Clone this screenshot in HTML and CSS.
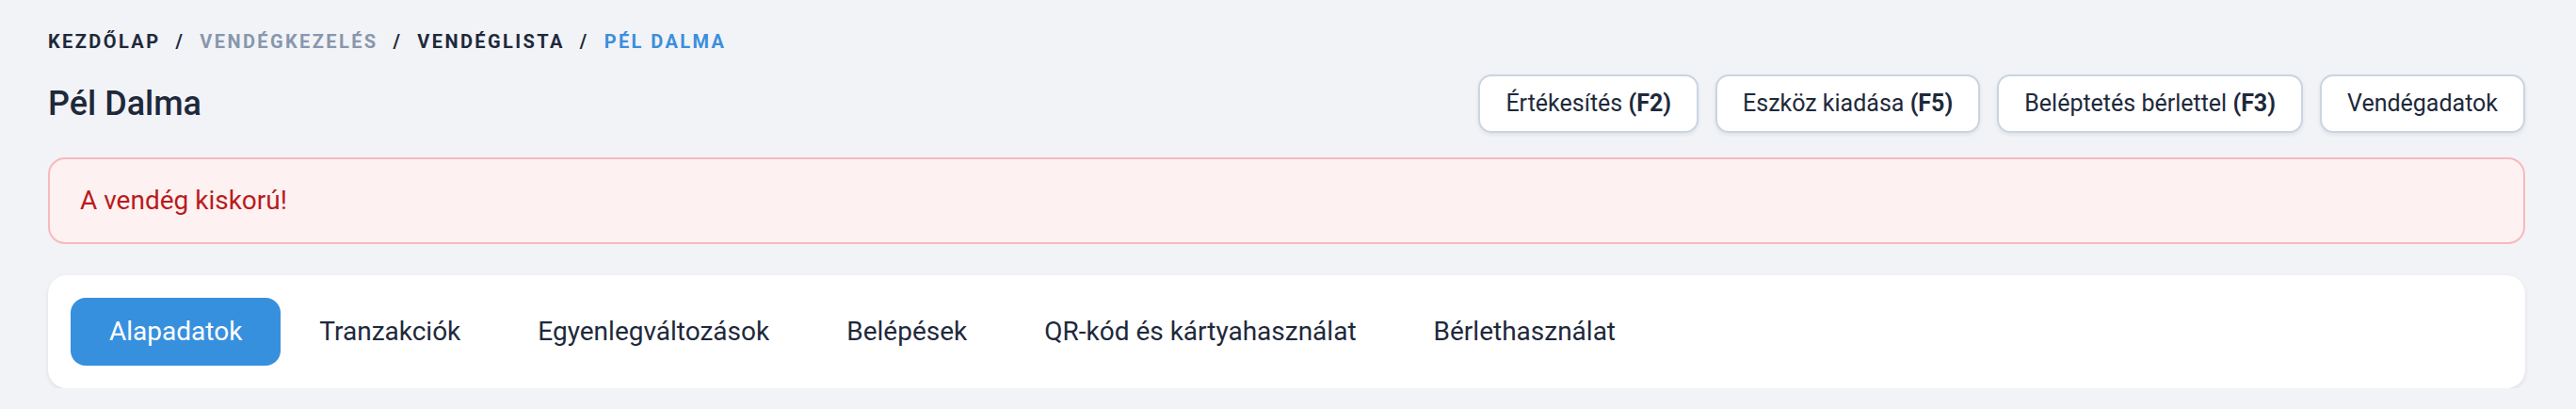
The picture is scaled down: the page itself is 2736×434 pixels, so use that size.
FILE: index.html
```html
<!DOCTYPE html>
<html lang="hu">
<head>
<meta charset="utf-8">
<title>Pél Dalma</title>
<link rel="stylesheet" href="styles.css">
</head>
<body>
<main class="page">
  <nav class="breadcrumb">
    <a class="crumb crumb-dark" href="#">Kezdőlap</a>
    <span class="sep">/</span>
    <a class="crumb crumb-muted" href="#">Vendégkezelés</a>
    <span class="sep">/</span>
    <a class="crumb crumb-dark" href="#">Vendéglista</a>
    <span class="sep">/</span>
    <span class="crumb crumb-active">Pél Dalma</span>
  </nav>

  <header class="header">
    <h1 class="title">Pél Dalma</h1>
    <div class="actions">
      <button class="btn">Értékesítés <b>(F2)</b></button>
      <button class="btn">Eszköz kiadása <b>(F5)</b></button>
      <button class="btn">Beléptetés bérlettel <b>(F3)</b></button>
      <button class="btn">Vendégadatok</button>
    </div>
  </header>

  <div class="alert">A vendég kiskorú!</div>

  <section class="card">
    <div class="tabs">
      <button class="tab tab-active">Alapadatok</button>
      <button class="tab">Tranzakciók</button>
      <button class="tab">Egyenlegváltozások</button>
      <button class="tab">Belépések</button>
      <button class="tab">QR-kód és kártyahasználat</button>
      <button class="tab">Bérlethasználat</button>
    </div>
  </section>
</main>
</body>
</html>
```

FILE: styles.css
```css
* { box-sizing: border-box; }

html, body {
  margin: 0;
  padding: 0;
  background: #f2f3f7;
}

body {
  font-family: Roboto, "Liberation Sans", Arial, sans-serif;
  color: #1e293b;
}

.page {
  padding: 30px 54px 0 51px;
}

.breadcrumb {
  display: flex;
  align-items: center;
  font-size: 20px;
  line-height: 28px;
  font-weight: 700;
  text-transform: uppercase;
  letter-spacing: 0.12em;
}

.crumb { text-decoration: none; }
.crumb-dark { color: #1e293b; }
.crumb-muted { color: #8797ad; }
.crumb-active { color: #3a8fdc; }

.sep {
  color: #1e293b;
  margin: 0 16px 0 16px;
}

.header {
  display: flex;
  align-items: center;
  justify-content: space-between;
  margin-top: 21px;
}

.title {
  margin: 0;
  font-size: 36px;
  line-height: 44px;
  font-weight: 500;
  color: #1e293b;
}

.actions {
  display: flex;
  gap: 18px;
}

.btn {
  font-family: inherit;
  font-size: 25px;
  line-height: 32px;
  color: #1e293b;
  background: #ffffff;
  border: 2px solid #cad5e1;
  border-radius: 14px;
  padding: 13px 27px;
  box-shadow: 0 2px 4px rgba(15, 23, 42, 0.08);
  cursor: pointer;
}

.btn b { font-weight: 700; }

.alert {
  margin-top: 26px;
  background: #fef1f2;
  border: 2px solid #f6b9be;
  border-radius: 18px;
  padding: 26px 32px;
  font-size: 28px;
  line-height: 36px;
  color: #b91c1c;
}

.card {
  margin-top: 33px;
  background: #ffffff;
  border-radius: 20px;
  padding: 24px;
  box-shadow: 0 2px 5px rgba(15, 23, 42, 0.09);
}

.tabs {
  display: flex;
}

.tab {
  font-family: inherit;
  font-size: 28px;
  line-height: 36px;
  color: #1e293b;
  background: transparent;
  border: 0;
  border-radius: 16px;
  padding: 18px 41px;
  cursor: pointer;
}

.tab-active {
  background: #3790de;
  color: #ffffff;
}
```
